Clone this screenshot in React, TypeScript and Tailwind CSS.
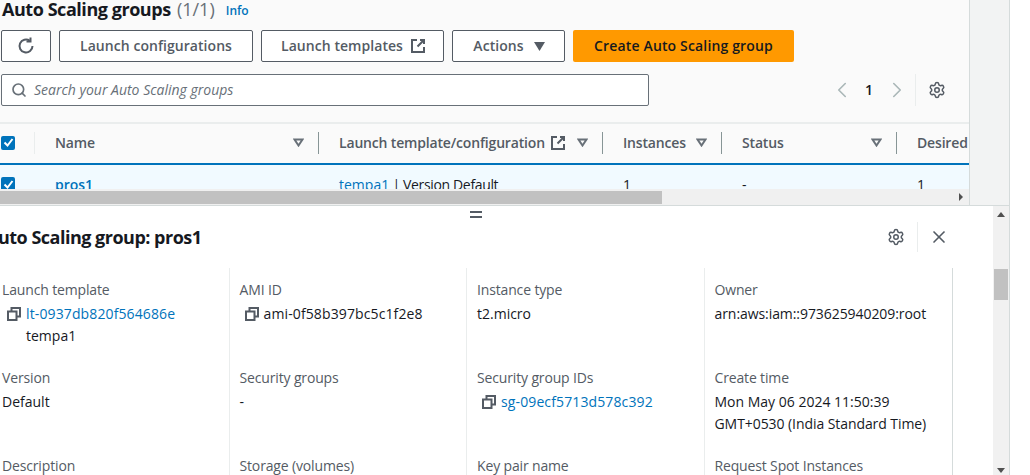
import React from 'react';
import { Settings, Search, ChevronLeft, ChevronRight, X } from 'lucide-react';

const font = "font-['Open_Sans','Noto_Sans',sans-serif]";

const ExternalIcon = () => (
  <svg width="14" height="14" viewBox="0 0 14 14" fill="none" stroke="#545b64" strokeWidth="2" className="shrink-0">
    <path d="M6 1H1v12h12V8" />
    <path d="M9 1h4v4M13 1 6.500 7.500" />
  </svg>
);

const CopyIcon = () => (
  <svg width="14" height="14" viewBox="0 0 14 14" fill="none" stroke="#545b64" strokeWidth="2" className="shrink-0">
    <path d="M1 4.500h8.500V13H1z" />
    <path d="M4.500 4V1H13v8.500h-3" />
  </svg>
);

const RefreshIcon = () => (
  <svg width="18" height="18" viewBox="0 0 18 18" fill="none" stroke="#545b64" strokeWidth="2" className="shrink-0">
    <path d="M15.500 9A6.500 6.500 0 1 1 12.800 3.700" />
    <path d="M13.500 0.500v4h-4" />
  </svg>
);

const Filter = () => (
  <svg width="11" height="9" viewBox="0 0 11 9" fill="none" stroke="#687078" strokeWidth="2" className="shrink-0">
    <path d="M1.500 1.500h8L5.500 7.500z" />
  </svg>
);

const Checkbox = () => (
  <span className="flex h-[14px] w-[14px] shrink-0 items-center justify-center rounded-[2px] bg-[#0073bb]">
    <svg width="11" height="11" viewBox="0 0 11 11" fill="none" stroke="#fff" strokeWidth="2">
      <path d="M1.500 5.500 4.500 8.500 9.500 2" />
    </svg>
  </span>
);

const Button: React.FC<{ className: string; children: React.ReactNode }> = ({ className, children }) => (
  <button className={`flex h-8 items-center justify-center gap-2 rounded-[2px] border border-[#545b64] bg-white text-sm font-semibold tracking-[0.05px] text-[#545b64] ${className}`}>
    {children}
  </button>
);

const HeaderCell: React.FC<{ label: string; width: string; icon?: boolean }> = ({ label, width, icon }) => (
  <div className={`flex h-full shrink-0 items-center ${width}`}>
    <div className="flex h-[22px] w-full items-center justify-between border-r border-[#879596] pl-[20px] pr-[14px]">
      <span className="flex items-center gap-1.5 whitespace-nowrap text-sm font-semibold tracking-[-0.17px] text-[#545b64]">
        {label}
        {icon && <ExternalIcon />}
      </span>
      <Filter />
    </div>
  </div>
);

const Field: React.FC<{ label: string; children?: React.ReactNode }> = ({ label, children }) => (
  <div className="h-[88px]">
    <div className="text-sm leading-[22px] tracking-[-0.15px] text-[#545b64]">{label}</div>
    <div className="pt-[2px] text-sm leading-[22px] text-[#16191f]">{children}</div>
  </div>
);

const CopyValue: React.FC<{ value: string; link?: boolean }> = ({ value, link }) => (
  <div className="flex items-center gap-[5px] pl-[5px]">
    <CopyIcon />
    <span className={`tracking-[0.12px] ${link ? 'text-[#0073bb]' : ''}`}>{value}</span>
  </div>
);

const Column: React.FC<{ children: React.ReactNode; className: string }> = ({ children, className }) => (
  <div className={`shrink-0 border-r pl-[10px] pt-[11px] ${className}`}>{children}</div>
);

export default function App() {
  return (
    <div className={`flex h-[475px] w-[1030px] flex-col overflow-hidden bg-white ${font}`}>
      {/* top area */}
      <div className="flex h-[206px] w-[1010px] shrink-0 border-b border-r border-[#d5dbdb]">
        <div className="flex w-[970px] shrink-0 flex-col overflow-hidden border-r border-[#d5dbdb] bg-[#fafafa]">
          <div className="flex h-[30px] shrink-0 items-start pl-[2px]">
            <h1 className="-mt-[3px] text-lg font-bold leading-[24px] tracking-[-0.45px] text-[#16191f]">
              Auto Scaling groups <span className="ml-[2px] font-normal tracking-normal text-[#687078]">(1/1)</span>
            </h1>
            <span className="ml-[11px] mt-[1px] text-xs font-semibold leading-[20px] text-[#0073bb]">Info</span>
          </div>

          <div className="flex shrink-0 gap-2 pl-px">
            <Button className="w-[50px]">
              <RefreshIcon />
            </Button>
            <Button className="w-[194px]">Launch configurations</Button>
            <Button className="w-[183px] pl-px">
              Launch templates
              <ExternalIcon />
            </Button>
            <Button className="w-[113px] pl-[3px]">
              Actions
              <svg width="14" height="9" viewBox="0 0 14 9" className="ml-[1px] shrink-0" fill="#545b64">
                <path d="M1 0h11L6.500 9z" />
              </svg>
            </Button>
            <button className="flex h-8 w-[221px] items-center justify-center rounded-[2px] bg-[#ff9900] text-sm font-semibold tracking-[0.15px] text-[#16191f]">
              Create Auto Scaling group
            </button>
          </div>

          <div className="mt-3 flex h-8 shrink-0 items-center pl-px">
            <div className="flex h-8 w-[648px] items-center gap-[7px] rounded-[2px] border border-[#687078] bg-white pl-[9px]">
              <Search size={16} strokeWidth={2.5} color="#687078" />
              <span className="text-sm italic text-[#687078]">Search your Auto Scaling groups</span>
            </div>
            <div className="ml-[180px] flex items-center">
              <ChevronLeft size={26} strokeWidth={1.5} color="#aab7b8" />
              <span className="ml-[10px] mr-[11px] text-sm font-semibold text-[#16191f]">1</span>
              <ChevronRight size={26} strokeWidth={1.5} color="#aab7b8" />
              <div className="ml-[5px] flex h-8 items-center border-l border-[#eaeded] pl-[12px]">
                <Settings size={18} strokeWidth={2} color="#545b64" />
              </div>
            </div>
          </div>

          {/* table */}
          <div className="mt-4 flex h-[43px] shrink-0 items-center border-b-2 border-t-2 border-b-[#0073bb] border-t-[#eaeded] pb-[2px]">
            <div className="flex h-full w-[35px] shrink-0 items-center border-r-0 pl-px">
              <Checkbox />
              <div className="ml-[19px] h-[22px] border-l border-[#eaeded]" />
            </div>
            <HeaderCell label="Name" width="w-[284px]" />
            <HeaderCell label="Launch template/configuration" width="w-[284px]" icon />
            <HeaderCell label="Instances" width="w-[119px]" />
            <HeaderCell label="Status" width="w-[175px]" />
            <div className="whitespace-nowrap pl-[20px] text-sm font-semibold tracking-[-0.17px] text-[#545b64]">Desired</div>
          </div>
          <div className="flex h-[24px] shrink-0 overflow-hidden bg-[#f1faff] text-sm leading-[22px] text-[#16191f]">
            <div className="w-[35px] shrink-0 pl-px pt-[12px]">
              <Checkbox />
            </div>
            <div className="w-[284px] shrink-0 pl-[20px] pt-[9px] font-semibold text-[#0073bb]">pros1</div>
            <div className="w-[284px] shrink-0 pl-[20px] pt-[9px]">
              <span className="text-[#0073bb]">tempa1</span>
              <span className="tracking-[-0.35px]"> | Version Default</span>
            </div>
            <div className="w-[119px] shrink-0 pl-[20px] pt-[9px]">1</div>
            <div className="w-[175px] shrink-0 pl-[20px] pt-[9px]">-</div>
            <div className="pl-[20px] pt-[9px]">1</div>
          </div>
          {/* horizontal scrollbar */}
          <div className="flex h-[16px] shrink-0 items-start bg-[#f0f0f0] pt-[2px]">
            <div className="h-[13px] w-[662px] bg-[#c1c1c1]" />
            <svg width="6" height="8" viewBox="0 0 6 8" className="ml-[296px] mt-[2px]" fill="#505050">
              <path d="M1 0l4 4-4 4z" />
            </svg>
          </div>
        </div>
        <div className="flex-1 bg-[#f2f3f3]" />
      </div>

      {/* split panel */}
      <div className="flex min-h-0 flex-1">
        <div className="flex w-[993px] shrink-0 flex-col overflow-hidden">
          <div className="flex h-[12px] w-[952px] shrink-0 flex-col items-center justify-center gap-[3px] pt-[4px]">
            <div className="h-[2px] w-3 bg-[#545b64]" />
            <div className="h-[2px] w-3 bg-[#545b64]" />
          </div>
          <div className="flex h-[38px] shrink-0 items-center">
            <h2 className="-ml-[14px] whitespace-nowrap text-lg font-bold tracking-[-0.5px] text-[#16191f]">Auto Scaling group: pros1</h2>
            <div className="ml-auto mr-[44px] flex items-center">
              <Settings size={18} strokeWidth={2} color="#545b64" />
              <div className="ml-[12px] h-[30px] border-l border-[#eaeded] pl-[11px]">
                <X size={20} strokeWidth={2} color="#545b64" className="mt-[5px]" />
              </div>
            </div>
          </div>
          <div className="-ml-[8px] mt-[12px] flex flex-1">
            <Column className="w-[237.5px] border-[#eaeded]">
              <Field label="Launch template">
                <CopyValue value="lt-0937db820f564686e" link />
                <div className="pl-[24px]">tempa1</div>
              </Field>
              <Field label="Version">Default</Field>
              <Field label="Description" />
            </Column>
            <Column className="w-[237.5px] border-[#eaeded]">
              <Field label="AMI ID">
                <CopyValue value="ami-0f58b397bc5c1f2e8" />
              </Field>
              <Field label="Security groups">-</Field>
              <Field label="Storage (volumes)" />
            </Column>
            <Column className="w-[237.5px] border-[#eaeded]">
              <Field label="Instance type">t2.micro</Field>
              <Field label="Security group IDs">
                <CopyValue value="sg-09ecf5713d578c392" link />
              </Field>
              <Field label="Key pair name" />
            </Column>
            <Column className="w-[248.5px] border-[#d5dbdb]">
              <Field label="Owner">
                <span className="tracking-[-0.07px]">arn:aws:iam::973625940209:root</span>
              </Field>
              <Field label="Create time">
                Mon May 06 2024 11:50:39
                <br />
                <span className="tracking-[-0.07px]">GMT+0530 (India Standard Time)</span>
              </Field>
              <Field label="Request Spot Instances" />
            </Column>
          </div>
        </div>
        {/* vertical scrollbar */}
        <div className="flex h-full w-[17px] shrink-0 flex-col items-center border-r border-[#d5dbdb] bg-[#f1f1f1]">
          <svg width="8" height="5" viewBox="0 0 8 5" className="mt-[6px]" fill="#505050">
            <path d="M0 5l4-5 4 5z" />
          </svg>
          <div className="mt-[52px] h-[31px] w-[14px] bg-[#c1c1c1]" />
          <svg width="8" height="5" viewBox="0 0 8 5" className="mt-auto mb-[2px]" fill="#505050">
            <path d="M0 0l4 5 4-5z" />
          </svg>
        </div>
      </div>
    </div>
  );
}
